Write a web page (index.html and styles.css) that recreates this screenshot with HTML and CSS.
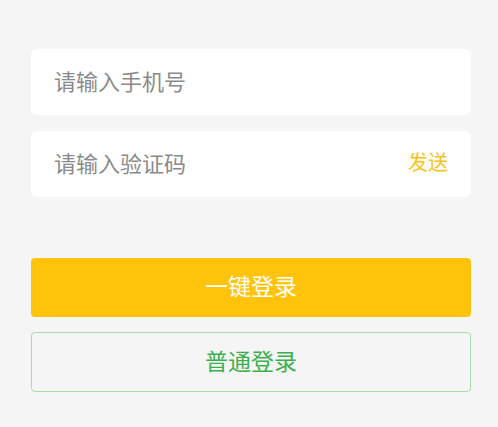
FILE: index.html
```html
<!DOCTYPE html>
<html lang="zh">
<head>
<meta charset="utf-8">
<link rel="stylesheet" href="styles.css">
</head>
<body>
<div class="page">
  <div class="fields">
    <div class="field"><span class="ph">请输入手机号</span></div>
    <div class="field"><span class="ph">请输入验证码</span><span class="send">发送</span></div>
  </div>
  <div class="actions">
    <div class="btn btn-primary">一键登录</div>
    <div class="btn btn-outline">普通登录</div>
  </div>
</div>
</body>
</html>
```

FILE: styles.css
```css
html, body {
  margin: 0;
  padding: 0;
  background: #f5f5f5;
}
body {
  font-family: "Noto Sans CJK SC", "Noto Sans", sans-serif;
}
.page {
  padding: 49px 27px 0 31px;
}
.fields {
  display: flex;
  flex-direction: column;
  gap: 16px;
}
.field {
  height: 66px;
  background: #ffffff;
  border-radius: 6px;
  display: flex;
  align-items: center;
  justify-content: space-between;
  padding: 0 23px 4px 23px;
  box-sizing: border-box;
  font-size: 22px;
  line-height: 1;
}
.ph {
  color: #8a8a8a;
}
.send {
  color: #f7c21a;
  font-size: 20px;
}
.actions {
  margin-top: 61px;
  display: flex;
  flex-direction: column;
  gap: 15px;
}
.btn {
  height: 59px;
  box-sizing: border-box;
  border-radius: 4px;
  display: flex;
  align-items: center;
  justify-content: center;
  font-size: 23px;
  line-height: 1;
  padding-bottom: 4px;
}
.btn-primary {
  background: #ffc30b;
  color: #ffffff;
}
.btn-outline {
  border: 1px solid #a9dbb0;
  color: #3cb04e;
  height: 60px;
}
```
